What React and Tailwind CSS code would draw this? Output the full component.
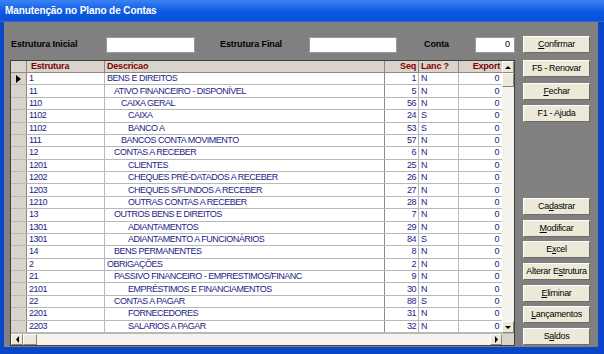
import React from 'react';

const rows = [
    ['1', 'BENS E DIREITOS', 1, 'N'],
    ['11', 'ATIVO FINANCEIRO - DISPONÍVEL', 5, 'N'],
    ['110', 'CAIXA GERAL', 56, 'N'],
    ['1102', 'CAIXA', 24, 'S'],
    ['1102', 'BANCO A', 53, 'S'],
    ['111', 'BANCOS CONTA MOVIMENTO', 57, 'N'],
    ['12', 'CONTAS A RECEBER', 6, 'N'],
    ['1201', 'CLIENTES', 25, 'N'],
    ['1202', 'CHEQUES PRÉ-DATADOS A RECEBER', 26, 'N'],
    ['1203', 'CHEQUES S/FUNDOS A RECEBER', 27, 'N'],
    ['1210', 'OUTRAS CONTAS A RECEBER', 28, 'N'],
    ['13', 'OUTROS BENS E DIREITOS', 7, 'N'],
    ['1301', 'ADIANTAMENTOS', 29, 'N'],
    ['1301', 'ADIANTAMENTO A FUNCIONÁRIOS', 84, 'S'],
    ['14', 'BENS PERMANENTES', 8, 'N'],
    ['2', 'OBRIGAÇÕES', 2, 'N'],
    ['21', 'PASSIVO FINANCEIRO - EMPRESTIMOS/FINANC', 9, 'N'],
    ['2101', 'EMPRÉSTIMOS E FINANCIAMENTOS', 30, 'N'],
    ['22', 'CONTAS A PAGAR', 88, 'S'],
    ['2201', 'FORNECEDORES', 31, 'N'],
    ['2203', 'SALARIOS A PAGAR', 32, 'N'],
];

const indents = ['pl-[2px]', 'pl-[9px]', 'pl-[16px]', 'pl-[23px]'];

// botão estilo windows clássico
const Btn = ({ children }) => (
    <div className="h-[17px] w-[67px] flex items-center justify-center bg-[#ece9d8] border border-t-white border-l-white border-r-[#6f6d62] border-b-[#6f6d62] text-[9px] tracking-[-0.3px] text-black leading-none whitespace-nowrap">
        {children}
    </div>
);

const Arrow = ({ dir }) => {
    const pts = {
        up: '1,4 4,1 7,4',
        down: '1,1 4,4 7,1',
        left: '4,0 1,3.5 4,7',
        right: '1,0 4,3.5 1,7',
    }[dir];
    const vertical = dir === 'up' || dir === 'down';
    return (
        <svg width={vertical ? 8 : 5} height={vertical ? 5 : 7} viewBox={vertical ? '0 0 8 5' : '0 0 5 7'}>
            <polygon points={pts} fill="#000" />
        </svg>
    );
};

const ScrollBtn = ({ dir, className = '' }) => (
    <div className={`flex items-center justify-center bg-[#ece9d8] border border-t-white border-l-white border-r-[#8a887c] border-b-[#8a887c] ${className}`}>
        <Arrow dir={dir} />
    </div>
);

const App = () => {
    return (
        <div
            className="w-[604px] h-[354px] bg-[#0a46c8] flex flex-col overflow-hidden"
            style={{ fontFamily: '"Liberation Sans", Arial, sans-serif' }}
        >
            {/* TITLE BAR */}
            <div className="h-[22px] shrink-0 bg-gradient-to-b from-[#3b83f2] via-[#0f5ce6] to-[#0a4fd6] flex items-center px-[5px] border-b border-[#2a6be8]">
                <span className="text-white font-bold text-[10px] tracking-[-0.1px]">Manutenção no Plano de Contas</span>
            </div>

            {/* BODY */}
            <div className="flex-1 ml-[4px] mr-[6px] mb-[7px] bg-[#808080] flex">
                {/* LEFT */}
                <div className="pl-[6px] pt-[14px] flex flex-col">
                    <div className="h-[17px] flex items-center text-[9px] font-bold text-black tracking-[-0.1px]">
                        <div className="w-[96px] pl-[1px]">Estrutura Inicial</div>
                        <div className="w-[89px] h-[16px] bg-white border border-[#9a9a9a]" />
                        <div className="ml-[25px] w-[89px]">Estrutura Final</div>
                        <div className="w-[88px] h-[16px] bg-white border border-[#9a9a9a]" />
                        <div className="ml-[27px] w-[51px]">Conta</div>
                        <div className="w-[40px] h-[16px] bg-white border border-[#9a9a9a] flex items-center justify-end pr-[4px] font-normal">0</div>
                    </div>

                    {/* GRID */}
                    <div className="mt-[7px] w-[505px] h-[286px] border border-[#404040] bg-white flex flex-col text-[9px] leading-none">
                        <div className="flex flex-1 min-h-0">
                            <div className="w-[491px] flex flex-col">
                                {/* header */}
                                <div className="h-[12px] shrink-0 flex bg-[#d8d4cc] text-[#800000] font-bold tracking-[-0.2px] border-b border-[#8a8a8a]">
                                    <div className="w-[16px] border-r border-[#8a8a8a]" />
                                    <div className="w-[78px] border-r border-[#8a8a8a] pl-[4px] flex items-center">Estrutura</div>
                                    <div className="w-[280px] border-r border-[#8a8a8a] pl-[2px] flex items-center">Descricao</div>
                                    <div className="w-[34px] border-r border-[#8a8a8a] pr-[2px] flex items-center justify-end">Seq</div>
                                    <div className="w-[40px] border-r border-[#8a8a8a] pl-[2px] flex items-center">Lanc ?</div>
                                    <div className="w-[43px] pr-[2px] flex items-center justify-end">Export</div>
                                </div>
                                {/* rows */}
                                <div className="flex-1 flex flex-col text-[#1c1c86] tracking-[-0.5px]">
                                    {rows.map(([code, desc, seq, lanc], i) => (
                                        <div key={i} className="flex-1 flex border-b border-[#b8b8b8]">
                                            <div className="w-[16px] bg-[#d8d4cc] border-r border-[#8a8a8a] flex items-center justify-center">
                                                {i === 0 && (
                                                    <svg width="5" height="8" viewBox="0 0 5 8">
                                                        <polygon points="0,0 5,4 0,8" fill="#000" />
                                                    </svg>
                                                )}
                                            </div>
                                            <div className="w-[78px] border-r border-[#b8b8b8] pl-[2px] flex items-center">{code}</div>
                                            <div className={`w-[280px] border-r border-[#8a8a8a] ${indents[code.length - 1]} flex items-center whitespace-nowrap overflow-hidden`}>{desc}</div>
                                            <div className="w-[34px] border-r border-[#b8b8b8] pr-[2px] flex items-center justify-end">{seq}</div>
                                            <div className="w-[40px] border-r border-[#b8b8b8] pl-[2px] flex items-center">{lanc}</div>
                                            <div className="w-[43px] pr-[3px] flex items-center justify-end">0</div>
                                        </div>
                                    ))}
                                </div>
                            </div>
                            {/* vertical scrollbar */}
                            <div className="w-[12px] flex flex-col bg-[#f4f3ee]">
                                <ScrollBtn dir="up" className="h-[12px]" />
                                <div className="h-[14px] bg-[#ece9d8] border border-t-white border-l-white border-r-[#8a887c] border-b-[#8a887c]" />
                                <div className="flex-1" />
                                <ScrollBtn dir="down" className="h-[12px]" />
                            </div>
                        </div>
                        {/* horizontal scrollbar */}
                        <div className="h-[12px] shrink-0 flex bg-[#f4f3ee] border-t border-[#b8b8b8]">
                            <ScrollBtn dir="left" className="w-[12px]" />
                            <div className="w-[14px] bg-[#ece9d8] border border-t-white border-l-white border-r-[#8a887c] border-b-[#8a887c]" />
                            <div className="flex-1" />
                            <ScrollBtn dir="right" className="w-[12px]" />
                            <div className="w-[12px] bg-[#d8d4cc]" />
                        </div>
                    </div>
                </div>

                {/* RIGHT BUTTONS */}
                <div className="ml-[8px] pt-[14px] flex flex-col">
                    <Btn><span><span className="underline">C</span>onfirmar</span></Btn>
                    <div className="mt-[7px] flex flex-col gap-[5.5px]">
                        <Btn>F5 - Renovar</Btn>
                        <Btn><span><span className="underline">F</span>echar</span></Btn>
                        <Btn>F1 - Ajuda</Btn>
                    </div>
                    <div className="mt-auto mb-[2px] flex flex-col gap-[4.7px]">
                        <Btn><span>Ca<span className="underline">d</span>astrar</span></Btn>
                        <Btn><span><span className="underline">M</span>odificar</span></Btn>
                        <Btn><span>E<span className="underline">x</span>cel</span></Btn>
                        <Btn><span>Alterar E<span className="underline">s</span>trutura</span></Btn>
                        <Btn><span><span className="underline">E</span>liminar</span></Btn>
                        <Btn><span><span className="underline">L</span>ançamentos</span></Btn>
                        <Btn><span>S<span className="underline">a</span>ldos</span></Btn>
                    </div>
                </div>
            </div>
        </div>
    );
};

export default App;
